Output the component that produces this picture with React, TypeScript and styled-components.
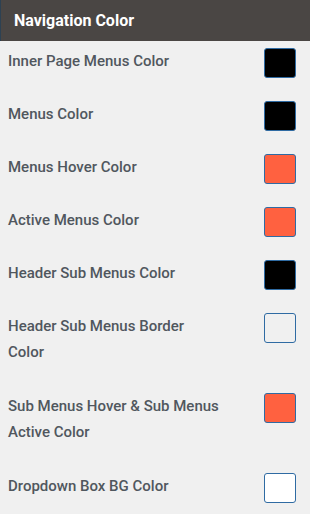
import styled, { createGlobalStyle } from 'styled-components';

const GlobalStyle = createGlobalStyle`
  html, body {
    margin: 0;
    padding: 0;
    background: #f0f0f0;
  }
  body {
    font-family: Roboto, 'Liberation Sans', Arial, sans-serif;
  }
`;

const Panel = styled.div`
  width: 310px;
  height: 514px;
  background: #f0f0f0;
  overflow: hidden;
`;

const Title = styled.div`
  height: 41px;
  background: #4a4644;
  border-left: 1px solid #2d4152;
  color: #ffffff;
  font-size: 16px;
  font-weight: 700;
  display: flex;
  align-items: center;
  padding-left: 13px;
`;

const List = styled.div`
  padding: 7px 14px 0 8px;
`;

// rows whose label wraps get a bit more room below
const Row = styled.div<{ $multi?: boolean }>`
  display: flex;
  justify-content: space-between;
  align-items: flex-start;
  margin-bottom: ${(p) => (p.$multi ? '28px' : '23px')};
`;

const Label = styled.div`
  width: 212px;
  font-size: 15px;
  font-weight: 500;
  line-height: 26px;
  color: #50575e;
`;

const Swatch = styled.div<{ $color: string }>`
  width: 30px;
  height: 28px;
  background: ${(p) => p.$color};
  border: 1px solid #2f6ba3;
  border-radius: 3px;
  flex-shrink: 0;
`;

const items = [
  { label: 'Inner Page Menus Color', color: '#000000' },
  { label: 'Menus Color', color: '#000000' },
  { label: 'Menus Hover Color', color: '#ff6140' },
  { label: 'Active Menus Color', color: '#ff6140' },
  { label: 'Header Sub Menus Color', color: '#000000' },
  { label: 'Header Sub Menus Border Color', color: '#f0f0f0', multi: true },
  { label: 'Sub Menus Hover & Sub Menus Active Color', color: '#ff6140', multi: true },
  { label: 'Dropdown Box BG Color', color: '#ffffff' },
];

export default function App() {
  return (
    <>
      <GlobalStyle />
      <Panel>
        <Title>Navigation Color</Title>
        <List>
          {items.map((it) => (
            <Row key={it.label} $multi={it.multi}>
              <Label>{it.label}</Label>
              <Swatch $color={it.color} />
            </Row>
          ))}
        </List>
      </Panel>
    </>
  );
}
